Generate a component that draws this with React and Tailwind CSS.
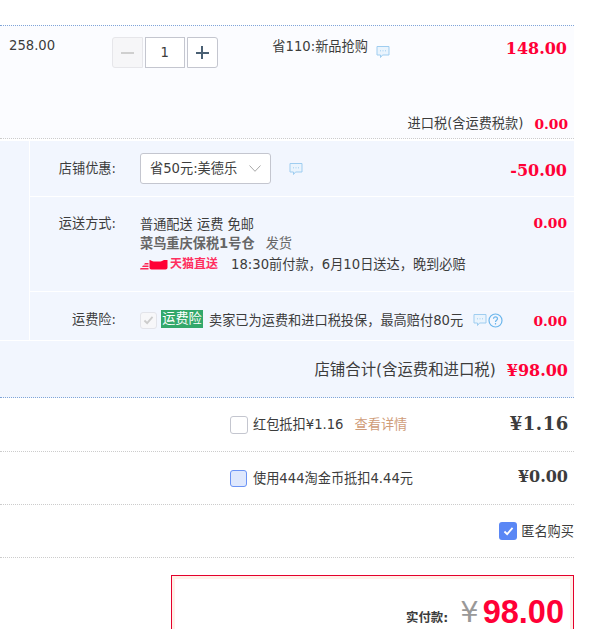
import React from "react";

const sans = "font-['DejaVu_Sans','Noto_Sans_CJK_SC',sans-serif]";
const serif = "font-['DejaVu_Serif','Noto_Sans_CJK_SC',serif]";

function Bubble({ className }) {
  return (
    <svg viewBox="0 0 14 14" className={className} fill="none">
      <path d="M1 1.5h12v8.500H6.500L4.500 12.500V10H1z" fill="#eaf4fd" stroke="#9fcdf0" strokeWidth="1" />
      <path d="M4 5.800h1M6.500 5.800h1M9 5.800h1" stroke="#9fcdf0" strokeWidth="1" />
    </svg>
  );
}

function Price({ children, className = "" }) {
  return <span className={`${serif} font-bold text-[#ff0036] ${className}`}>{children}</span>;
}

export default function App() {
  return (
    <div className={`w-[614px] h-[629px] overflow-hidden bg-white text-[13.2px] text-[#3c3c3c] ${sans}`}>
      <div className="w-[574px]">
        <div className="h-[25px]" />

        {/* Item row */}
        <div className="h-[114px] bg-[#fbfcff] border-y border-dotted border-t-[#80a5d8] border-b-[#cccccc] flex flex-col">
          <div className="flex items-start h-[88px]">
            <div className="w-[112px] pl-[9px] pt-[12px] leading-[16px]">258.00</div>
            <div className="flex w-[161px] pt-[11px]">
              <div className="w-[31px] h-[31px] border border-[#e6e6ea] bg-[#f6f6f8] rounded-l-[3px] flex items-center justify-center">
                <div className="w-[13px] h-[2px] bg-[#cfcfcf]" />
              </div>
              <div className="w-[40px] h-[31px] ml-[2px] border border-[#c4c6cf] bg-white flex items-center justify-center">1</div>
              <div className="w-[31px] h-[31px] ml-[2px] border border-[#c4c6cf] bg-white rounded-r-[3px] flex items-center justify-center relative">
                <div className="w-[13px] h-[2px] bg-[#4a6073]" />
                <div className="absolute w-[2px] h-[13px] bg-[#4a6073]" />
              </div>
            </div>
            <div className="flex w-[234px] pt-[13px] items-start">
              <span className="leading-[16px]">省110:新品抢购</span>
              <Bubble className="w-[14px] h-[14px] ml-[8px] mt-[6px]" />
            </div>
            <Price className="flex-1 text-right pr-[7px] pt-[13px] text-[16px] leading-[20px]">148.00</Price>
          </div>
          <div className="flex justify-end items-center pr-[6px] mt-[1px]">
            <span className="leading-[18px]">进口税(含运费税款)</span>
            <Price className="ml-[11px] text-[13.8px] leading-[18px]">0.00</Price>
          </div>
        </div>

        {/* Store section */}
        <div className="mt-[2px] bg-[#f2f6fe]">
          <div className="border-b border-white pl-[29px]">
            <div className="border-l border-white">
              <div className="h-[56px] border-b border-white flex items-center">
                <div className="w-[86px] text-right leading-[18px]">店铺优惠:</div>
                <div className="ml-[24px] w-[131px] h-[31px] border border-[#c4c6cf] rounded-[3px] bg-white flex items-center justify-between pl-[9px] pr-[9px]">
                  <span>省50元:美德乐</span>
                  <svg viewBox="0 0 12 7" className="w-[12px] h-[7px]" fill="none">
                    <path d="M0.500 0.500L6 6.300L11.500 0.500" stroke="#a8a8a8" />
                  </svg>
                </div>
                <Bubble className="w-[14px] h-[14px] ml-[18px]" />
                <Price className="flex-1 text-right pr-[7px] mt-[4px] text-[16px] leading-[20px]">-50.00</Price>
              </div>

              <div className="h-[95px] border-b border-white flex items-start pt-[18px]">
                <div className="w-[86px] text-right leading-[18px]">运送方式:</div>
                <div className="ml-[24px] w-[360px] leading-[19px] text-[#3c3c3c]">
                  <div>普通配送 运费 免邮</div>
                  <div className="font-bold text-[#666666]">
                    菜鸟重庆保税1号仓<span className="font-normal ml-[11px]">发货</span>
                  </div>
                  <div className="flex items-center h-[22px]">
                    <svg viewBox="0 0 28 12" className="w-[28px] h-[12px] shrink-0" fill="#ff0036">
                      <path d="M10 2c1.500 .5 2.500 1.500 3.500 1.500h7c1 0 2-1 3.500-1.500h3.500v7.500c0 1.200-.8 2-2 2H11.500c-1.200 0-2-.8-2-2V2z" />
                      <path d="M5 5h3.500v1.500H4zM3 7.500h5.500V9H2zM0.500 10h8v1.500H0z" opacity=".85" />
                    </svg>
                    <span className="ml-[2px] text-[12px] text-[#ff2f5f] font-bold">天猫直送</span>
                    <span className="ml-[13px]">{"18:30前付款\uFF0C6月10日送达\uFF0C晚到必赔"}</span>
                  </div>
                </div>
                <Price className="flex-1 text-right pr-[7px] text-[13.800px] leading-[18px] mt-[-1px]">0.00</Price>
              </div>

              <div className="h-[48px] flex items-center pt-[8px]">
                <div className="w-[86px] text-right leading-[18px]">运费险:</div>
                <div className="ml-[24px] w-[17px] h-[17px] border border-[#e3e4ea] rounded-[3px] bg-[#f7f7f9] flex items-center justify-center">
                  <svg viewBox="0 0 12 10" className="w-[11px] h-[9px]" fill="none">
                    <path d="M1.500 5l3 3l6-7" stroke="#cccccc" strokeWidth="2" />
                  </svg>
                </div>
                <span className="ml-[4px] w-[42px] h-[18px] mt-[-2px] bg-[#34a86b] text-white leading-[18px] text-center">运费险</span>
                <span className="ml-[6px] mt-[1px]">{"卖家已为运费和进口税投保\uFF0C最高赔付80元"}</span>
                <Bubble className="w-[14px] h-[14px] ml-[10px]" />
                <svg viewBox="0 0 15 15" className="w-[15px] h-[15px] ml-[1px]" fill="none">
                  <circle cx="7.500" cy="7.500" r="6.500" stroke="#6cb6ec" strokeWidth="1.200" />
                  <path d="M5.500 5.800c0-1.200.9-2 2-2s2 .8 2 1.900c0 1.500-2 1.500-2 3.200" stroke="#6cb6ec" strokeWidth="1.200" />
                  <path d="M7.500 10v1.500" stroke="#6cb6ec" strokeWidth="1.200" />
                </svg>
                <Price className="flex-1 text-right pr-[7px] text-[13.800px] leading-[18px] mt-[2px]">0.00</Price>
              </div>
            </div>
          </div>

          <div className="h-[57px] border-b border-dotted border-[#80a5d8] flex justify-end items-center pr-[6px] pt-[3px]">
            <span className="text-[15.400px]">店铺合计(含运费和进口税)</span>
            <Price className="ml-[11px] text-[16px]">¥98.00</Price>
          </div>
        </div>

        {/* Deductions */}
        <div className="h-[54px] border-b border-dotted border-[#cccccc] flex items-center pl-[230px] pr-[5px]">
          <div className="w-[18px] h-[18px] border border-[#c4c6cf] rounded-[3px] bg-white mt-[1px]" />
          <span className="ml-[5px] mt-[1px]">红包抵扣¥1.16</span>
          <span className="ml-[11px] mt-[1px] text-[#cf9c78]">查看详情</span>
          <span className={`ml-auto mt-[-3px] ${serif} font-bold text-[18px] tracking-[0.6px]`}>¥1.16</span>
        </div>
        <div className="h-[53px] border-b border-dotted border-[#cccccc] flex items-center pl-[230px] pr-[6px]">
          <div className="w-[17px] h-[17px] border border-[#6b93f5] rounded-[3px] bg-[#dfe8fd] mt-[1px]" />
          <span className="ml-[6px] mt-[2px]">使用444淘金币抵扣4.44元</span>
          <span className={`ml-auto mt-[-2px] ${serif} font-bold text-[16px]`}>¥0.00</span>
        </div>
        <div className="h-[53px] border-b border-dotted border-[#cccccc] flex items-center justify-end">
          <div className="w-[18px] h-[18px] rounded-[3px] bg-[#5a87f5] flex items-center justify-center">
            <svg viewBox="0 0 12 10" className="w-[11px] h-[9px]" fill="none">
              <path d="M1.500 5l3 3l6-7" stroke="#ffffff" strokeWidth="2" />
            </svg>
          </div>
          <span className="ml-[4px] mt-[1px]">匿名购买</span>
        </div>

        {/* Payment box */}
        <div className="ml-[171px] mt-[17px] h-[80px] border border-[#e4002b] border-b-0">
          <div className="h-[79px] border-[3px] border-[#fff0e8] border-b-0 bg-white flex items-start justify-end pr-[6px] pt-[17px]">
            <span className="mt-[13px] text-[12.400px] font-bold">实付款:</span>
            <span className="ml-[12px] text-[29px] leading-[32px] text-[#999999]">¥</span>
            <span className="ml-[4px] font-['Liberation_Sans',sans-serif] font-bold text-[32.500px] leading-[32px] text-[#ff0036]">98.00</span>
          </div>
        </div>
      </div>
    </div>
  );
}
